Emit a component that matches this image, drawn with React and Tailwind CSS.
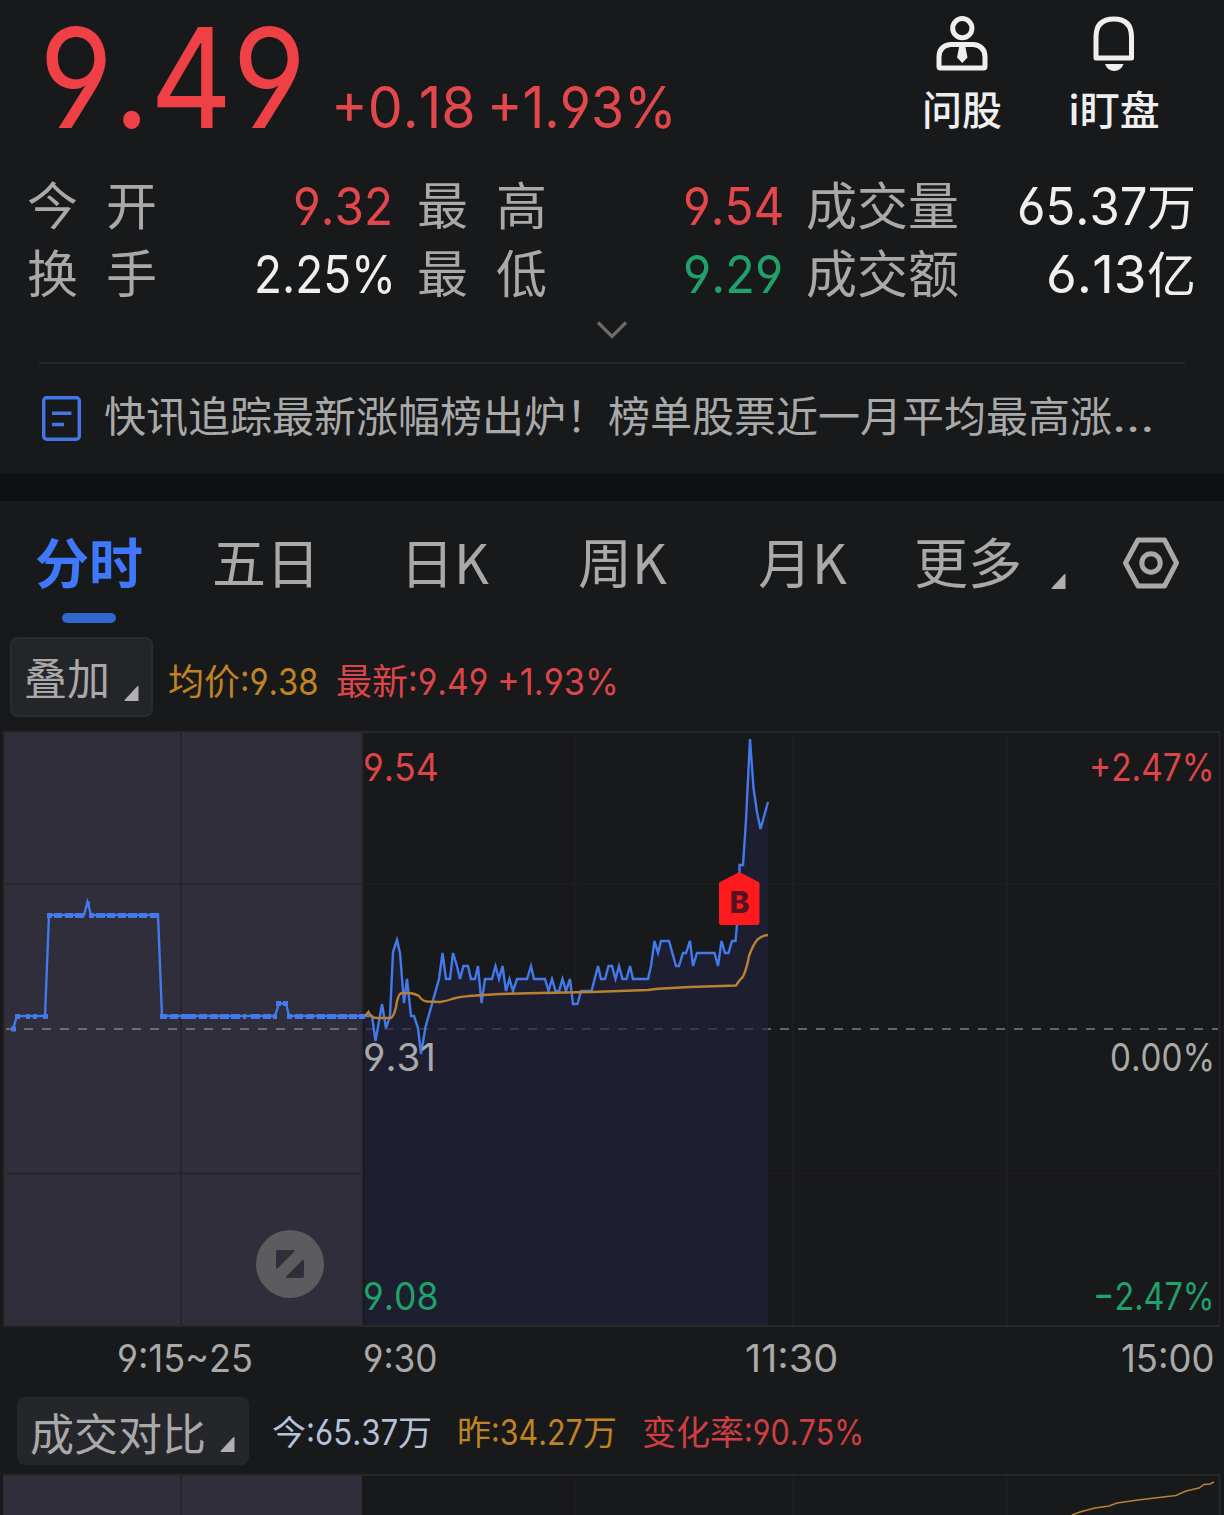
import React, { useLayoutEffect, useRef, useState } from "react";

const CJK = "font-['Noto_Sans_CJK_SC',sans-serif]";
const NUM = "font-['Inter',sans-serif] [font-feature-settings:'cv04','cv03'] [font-kerning:none]";

/* Numeric text condensed horizontally so that it fills its box exactly. */
function Num({ children, className = "" }) {
  const box = useRef(null);
  const inner = useRef(null);
  const [k, setK] = useState(1);
  useLayoutEffect(() => {
    setK(box.current.clientWidth / inner.current.offsetWidth);
  }, [children]);
  return (
    <span ref={box} className={`block shrink-0 whitespace-nowrap ${NUM} ${className}`}>
      <span ref={inner} className="inline-block origin-left" style={{ transform: `scaleX(${k})` }}>
        {children}
      </span>
    </span>
  );
}

function Han({ children, className = "" }) {
  return <span className={`block shrink-0 whitespace-nowrap ${CJK} ${className}`}>{children}</span>;
}

function Corner({ className = "" }) {
  return (
    <svg className={`block h-[15px] w-[15px] shrink-0 ${className}`} viewBox="0 0 15 15">
      <path d="M14.5 0.5V15H1.2Q0 15 0.8 13.8L12.8 0.8Q14.5 -0.5 14.5 0.5Z" fill="#b0b0b0" />
    </svg>
  );
}

function Header() {
  return (
    <header className="flex h-[169px] items-start">
      <div className="flex items-baseline pt-2 text-[#ee4045]">
        <Num className="ml-[39px] w-[268px] text-[139px] leading-[139px]">9.49</Num>
        <Num className="ml-[24px] w-[145px] text-[57px] leading-[57px] text-[#e2474b]">+0.18</Num>
        <Num className="ml-[11px] w-[190px] text-[57px] leading-[57px] text-[#e2474b]">+1.93%</Num>
      </div>
      <div className="ml-[244px] flex w-[82px] flex-col items-center pt-4 text-[#efefef]">
        <svg className="h-[55px] w-[52px]" viewBox="0 0 52 55" fill="none" stroke="#efefef" strokeWidth="5">
          <circle cx="26.3" cy="12.2" r="9.6" />
          <path d="M14.500 28.500H37.500Q49 30 49 41V50.500Q49 52 47.500 52H4.500Q3 52 3 50.500V41Q3 30 14.500 28.500Z" />
          <path d="M23.500 29H29L31.500 41.500L26.300 47L21 41.500Z" fill="#efefef" stroke="none" />
        </svg>
        <Han className="mt-[8px] text-[40px] leading-[58px] font-medium">问股</Han>
      </div>
      <div className="ml-[65px] flex w-[92px] flex-col items-center pt-4 text-[#efefef]">
        <svg className="h-[55px] w-[42px]" viewBox="0 0 42 55" fill="none" stroke="#efefef" strokeWidth="5">
          <path d="M3 21Q3 3 21 3Q38.500 3 38.500 21V42H3Z" strokeLinejoin="round" />
          <path d="M12 48H30.500Q28 55 21.200 55Q14.500 55 12 48Z" fill="#efefef" stroke="none" />
        </svg>
        <Han className="mt-[8px] text-[40px] leading-[58px] font-medium">i盯盘</Han>
      </div>
    </header>
  );
}

const LABEL = "text-[51px] leading-[68px] text-[#a9a9a9]";

function Stats() {
  return (
    <section className="text-[#efefef]">
      <div className="flex h-[68px] items-baseline">
        <Han className={`ml-[27px] w-[79px] ${LABEL}`}>今</Han>
        <Han className={`w-[187px] ${LABEL}`}>开</Han>
        <Num className="w-[100px] text-[52px] leading-[68px] text-[#e2474b]">9.32</Num>
        <Han className={`ml-[24px] w-[79px] ${LABEL}`}>最</Han>
        <Han className={`w-[187px] ${LABEL}`}>高</Han>
        <Num className="w-[101px] text-[52px] leading-[68px] text-[#e2474b]">9.54</Num>
        <Han className={`ml-[22px] w-[211px] ${LABEL}`}>成交量</Han>
        <Num className="w-[130px] text-[52px] leading-[68px]">65.37</Num>
        <Han className="text-[49px] leading-[68px]">万</Han>
      </div>
      <div className="flex h-[68px] items-baseline">
        <Han className={`ml-[27px] w-[79px] ${LABEL}`}>换</Han>
        <Han className={`w-[148px] ${LABEL}`}>手</Han>
        <Num className="w-[142px] text-[52px] leading-[68px]">2.25%</Num>
        <Han className={`ml-[21px] w-[79px] ${LABEL}`}>最</Han>
        <Han className={`w-[187px] ${LABEL}`}>低</Han>
        <Num className="w-[100px] text-[52px] leading-[68px] text-[#20a06b]">9.29</Num>
        <Han className={`ml-[23px] w-[240px] ${LABEL}`}>成交额</Han>
        <Num className="w-[101px] text-[52px] leading-[68px]">6.13</Num>
        <Han className="text-[49px] leading-[68px]">亿</Han>
      </div>
      <div className="flex h-[57px] justify-center pt-4">
        <svg className="h-[18px] w-[30px]" viewBox="0 0 30 18" fill="none" stroke="#6d6d6e" strokeWidth="3.2">
          <path d="M1 1.500L15 15.500L29 1.500" />
        </svg>
      </div>
    </section>
  );
}

function News() {
  return (
    <section className="mx-[39px] flex h-[112px] items-center border-t-2 border-[#262829] text-[#a9a9a9]">
      <svg className="-mt-[2px] ml-[3px] h-[45px] w-[39px] shrink-0" viewBox="0 0 39 45" fill="none" stroke="#4377e8" strokeWidth="3.4">
        <rect x="1.7" y="1.7" width="35.6" height="41.6" rx="3" />
        <path d="M10 17.300H29.500M10 28.500H22" />
      </svg>
      <div className="-mt-[7px] ml-[23px] flex items-baseline">
        <Han className="text-[42px] leading-[60px]">快讯追踪最新涨幅榜出炉！榜单股票近一月平均最高涨</Han>
        <Num className="w-[42px] text-[42px] leading-[60px]">...</Num>
      </div>
    </section>
  );
}

const TAB = "text-[54px] leading-[72px]";

function Tabs() {
  return (
    <nav className="flex h-[136px] items-start pt-6 text-[#a9a9a9]">
      <div className="ml-[35px] flex w-[177px] flex-col">
        <Han className={`${TAB} font-bold text-[#3f78fa]`}>分时</Han>
        <span className="mt-4 ml-[27px] block h-[10px] w-[54px] rounded-full bg-[#3067cf]" />
      </div>
      <Han className={`w-[188px] ${TAB}`}>五日</Han>
      <Han className={`w-[178px] ${TAB}`}>日K</Han>
      <Han className={`w-[180px] ${TAB}`}>周K</Han>
      <Han className={`w-[156px] ${TAB}`}>月K</Han>
      <Han className={`w-[137px] ${TAB}`}>更多</Han>
      <Corner className="mt-[49px]" />
      <svg className="mt-[12px] ml-[56px] h-[52px] w-[58px]" viewBox="0 0 58 52" fill="none" stroke="#a9a9a9" strokeWidth="5">
        <path d="M16 3H42.500L54.500 26L42.500 49H16L3.500 26Z" strokeLinejoin="round" />
        <circle cx="29" cy="26" r="9.2" />
      </svg>
    </nav>
  );
}

function Averages() {
  return (
    <div className="flex h-[94px] items-start">
      <button className="ml-[10px] flex h-[80px] w-[143px] items-center rounded-lg border-2 border-[#2a2b2d] bg-[#242528] text-[#a9a9a9]">
        <Han className="-mt-[2px] ml-3 w-[100px] text-left text-[43px] leading-[60px]">叠加</Han>
        <Corner className="mt-[32px]" />
      </button>
      <div className="flex items-baseline pt-4">
        <Han className="ml-[15px] text-[36px] leading-[52px] text-[#c08322]">均价</Han>
        <Num className="w-[79px] text-[37px] leading-[52px] text-[#c08322]">:9.38</Num>
        <Han className="ml-[17px] text-[36px] leading-[52px] text-[#dc4549]">最新</Han>
        <Num className="w-[80px] text-[37px] leading-[52px] text-[#dc4549]">:9.49</Num>
        <Num className="ml-[9px] w-[122px] text-[37px] leading-[52px] text-[#dc4549]">+1.93%</Num>
      </div>
    </div>
  );
}

const AUCTION =
  "13,1029 17,1016 45,1016 49,915 84,915 87.5,902 91,915 158,915 162,1016 275,1016 279,1003.5 286,1003.5 289,1016 365,1016";
const PRICE =
  "365,1016 372,1016 375.5,1041 382,1004 386,1028 390,1016 393,952 397,940 400,953 404,1003 407,979 411,1016 414,1016 418,1028 421,1054 425.5,1027 439,979 442.5,953 446,979 450,979 453,953 457,966 460,979 463.5,966 468,966 471,979 475,979 478,966 481.5,1003 485,979 492,979 495.5,966 499,979 502.5,966 506,991 509.5,979 513,991 517,979 527,979 531,966 534,979 545,979 548.5,991 552,979 555.5,991 559,991 562.5,979 566,991 570,979 573,1004 577.5,1004 581,991 591.5,991 598,966 601,979 605,979 608.5,966 612,966 615.5,979 619,966 622.5,979 626.5,979 630,966 633,979 648,979 651,966 654.5,941 658,953 661,941 669,941 676,966 679,966 683,953 686,953 690,941 693,966 697,953 714.5,953 718,966 721.5,941 725,953 728.5,953 732,941 735.5,941 737,925 739.5,871 739.5,865 743,865 746,820 750,739 753.5,788 757,812 760.5,829 768,802";
const AVERAGE =
  "M365 1016L368.5 1012Q371 1018 377 1018H391Q394 1016 396 1007Q398 993 402 993H409Q416 994 419 996Q422 1001 427 1001.5L440 1002Q447 1001 452 999Q462 996 476 995.5L500 994L540 993L591 992L648 990L658 988.7L690 987L736 985.5L739 981L743 976.5Q747 968 749 956Q753 945 757 940Q762 935.5 768 935";

function Chart() {
  const label = "absolute text-[38px] leading-[46px]";
  return (
    <section className="relative h-[597px]">
      <svg className="block h-[597px] w-[1224px]" viewBox="0 731 1224 597" fill="none">
        <rect x="3" y="732" width="359" height="594" fill="#2f2e3a" />
        <path d="M575.500 733V1326M793 733V1326M1007 733V1326M365 884H1219M365 1173.500H1219" stroke="#1c1d1e" strokeWidth="2" />
        <polygon points={`365,1326 ${PRICE} 768,1326`} fill="#1d1e2f" />
        <path d="M181 733V1326M6 884H361M6 1173.500H361" stroke="#25252d" strokeWidth="2" />
        <path d="M3 732H1220M3 1326H1220" stroke="#27282a" strokeWidth="2" />
        <path d="M362.500 733V1326M1219.500 732V1326M3.500 732V1326" stroke="#242528" strokeWidth="1.500" />
        <path d="M6 1029H362" stroke="#686d78" strokeWidth="1.800" strokeDasharray="9 9" />
        <path d="M366 1029H768" stroke="#36384c" strokeWidth="1.800" strokeDasharray="9 9" />
        <path d="M768 1029H1218" stroke="#62656a" strokeWidth="1.800" strokeDasharray="9 9" strokeDashoffset="6" />
        <polyline points={AUCTION} stroke="#4479ec" strokeWidth="2.400" />
        <path
          d="M47 915.500H52M54 915.500H62M65 915.500H73M75 915.500H84M86 904H90M89 915.500H94M96 915.500H105M107 915.500H115M118 915.500H126M128 915.500H137M139 915.500H147M150 915.500H159M11 1029H16M15 1016.500H20M26 1016.500H30M33 1016.500H37M43 1016.500H48M160 1016.500H167M170 1016.500H178M181 1016.500H196M199 1016.500H207M210 1016.500H218M220 1016.500H229M231 1016.500H240M243 1016.500H246M251 1016.500H260M263 1016.500H271M273 1016.500H277M276 1003.500H281M283 1003.500H288M287 1016.500H292M295 1016.500H303M306 1016.500H314M317 1016.500H325M327 1016.500H336M338 1016.500H347M349 1016.500H357M359 1016.500H365"
          stroke="#4479ec"
          strokeWidth="5"
        />
        <polyline points={PRICE} stroke="#4479ec" strokeWidth="2.400" />
        <path d={AVERAGE} stroke="#b9822f" strokeWidth="2.400" />
        <path d="M739.500 872L759.500 882.500V923Q759.500 925 757.500 925H721Q719 925 719 923V882.500Z" fill="#fc1a1c" />
        <circle cx="290" cy="1264" r="34" fill="#5c5c5e" />
        <path d="M278 1250H293.500Q295.500 1250.500 294 1252L278 1268Q276 1269.500 276 1267V1252Q276 1250 278 1250ZM302 1278H287Q285 1277.500 286.500 1276L302 1260.500Q304 1259 304 1261.500V1276Q304 1278 302 1278Z" fill="#2f2e3a" />
      </svg>
      <span className="absolute top-[154px] left-[719px] w-[41px] text-center font-['Inter',sans-serif] text-[30px] leading-[34px] font-extrabold text-[#54131f]">B</span>
      <Num className={`${label} top-[13px] left-[363px] w-[76px] text-[#dc4549]`}>9.54</Num>
      <Num className={`${label} top-[303px] left-[363px] w-[73px] text-[#a9a9a9]`}>9.31</Num>
      <Num className={`${label} top-[542px] left-[363px] w-[76px] text-[#20a06b]`}>9.08</Num>
      <Num className={`${label} top-[13px] left-[1089px] w-[126px] text-[#dc4549]`}>+2.47%</Num>
      <Num className={`${label} top-[303px] left-[1110px] w-[105px] text-[#a9a9a9]`}>0.00%</Num>
      <Num className={`${label} top-[542px] left-[1093px] w-[122px] text-[#20a06b]`}>−2.47%</Num>
    </section>
  );
}

function Times() {
  const t = "text-[38px] leading-[46px]";
  return (
    <div className="flex h-[69px] items-start pt-[7px] text-[#a9a9a9]">
      <Num className={`ml-[117px] w-[136px] ${t}`}>9:15~25</Num>
      <Num className={`ml-[110px] w-[75px] ${t}`}>9:30</Num>
      <Num className={`ml-[307px] w-[93px] ${t}`}>11:30</Num>
      <Num className={`ml-[283px] w-[93px] ${t}`}>15:00</Num>
    </div>
  );
}

function Turnover() {
  const n = "text-[35px] leading-[50px]";
  const h = "text-[34px] leading-[50px]";
  return (
    <>
      <div className="flex h-[77px] items-start">
        <button className="ml-[17px] flex h-[68px] w-[232px] items-center rounded-lg bg-[#252629] text-[#a9a9a9]">
          <Han className="mt-px ml-[13px] w-[190px] text-left text-[44px] leading-[60px]">成交对比</Han>
          <Corner className="mt-[26px]" />
        </button>
        <div className="flex items-baseline pt-[9px]">
          <Han className={`ml-[23px] text-[#b6c1da] ${h}`}>今</Han>
          <Num className={`w-[92px] text-[#b6c1da] ${n}`}>:65.37</Num>
          <Han className={`text-[#b6c1da] ${h}`}>万</Han>
          <Han className={`ml-[25px] text-[#c08322] ${h}`}>昨</Han>
          <Num className={`w-[92px] text-[#c08322] ${n}`}>:34.27</Num>
          <Han className={`text-[#c08322] ${h}`}>万</Han>
          <Han className={`ml-[25px] text-[#d03e42] ${h}`}>变化率</Han>
          <Num className={`w-[120px] text-[#d03e42] ${n}`}>:90.75%</Num>
        </div>
      </div>
      <svg className="block h-[41px] w-[1224px]" viewBox="0 1474 1224 41" fill="none">
        <rect x="3" y="1475" width="359" height="40" fill="#2f2e3a" />
        <path d="M181 1475V1515" stroke="#25252d" strokeWidth="2" />
        <path d="M575.500 1475V1515M793 1475V1515M1007 1475V1515" stroke="#1c1d1e" strokeWidth="2" />
        <path d="M3 1475H1220M1219.500 1475V1515" stroke="#27282a" strokeWidth="2" />
        <path d="M1072 1515L1080 1512L1095 1508L1109 1506L1117 1503L1138 1500L1176 1495.500L1186 1491L1199 1488L1204 1484.500L1210 1484L1214 1482" stroke="#b9822f" strokeWidth="1.500" />
      </svg>
    </>
  );
}

export default function App() {
  return (
    <main className="h-[1515px] w-[1224px] overflow-hidden bg-[#18191a]">
      <Header />
      <Stats />
      <News />
      <div className="h-[27px] bg-[#0f1012]" />
      <Tabs />
      <Averages />
      <Chart />
      <Times />
      <Turnover />
    </main>
  );
}
